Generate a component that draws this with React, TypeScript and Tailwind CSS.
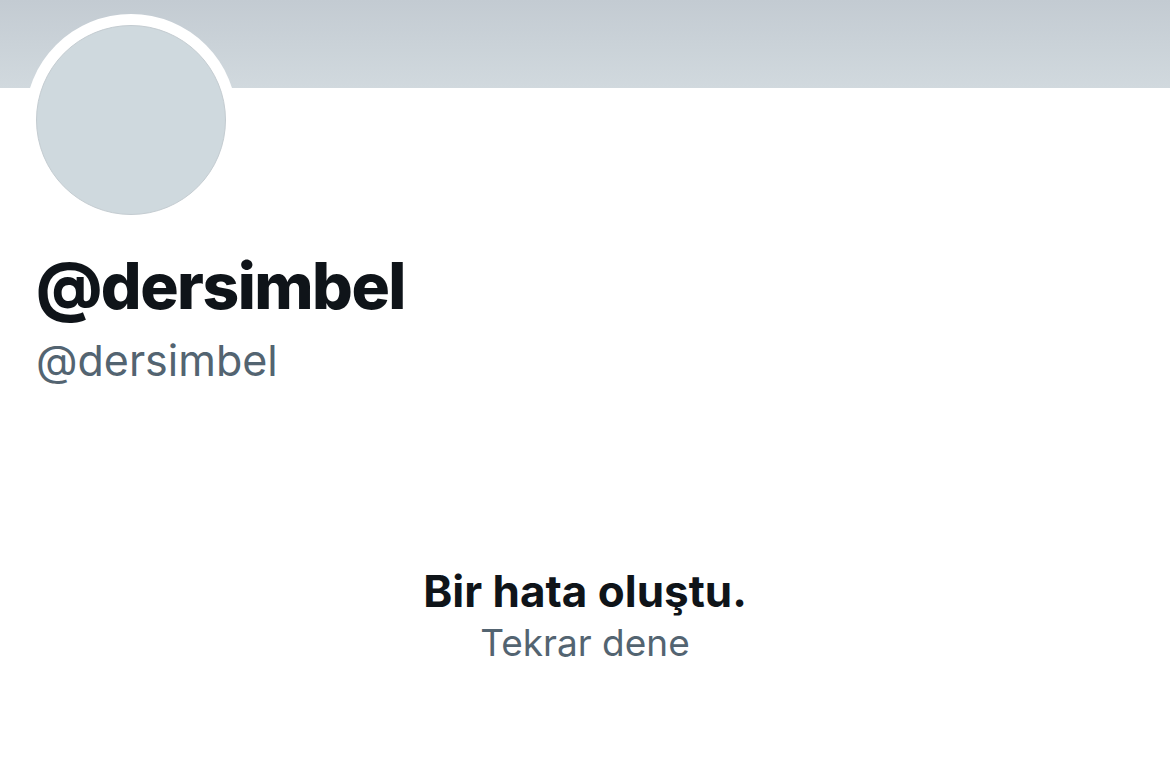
export default function App() {
  return (
    <div className="w-[1170px] h-[780px] bg-white overflow-hidden relative" style={{ fontFamily: "Inter, 'Noto Sans', sans-serif" }}>
      <div className="h-[88px] bg-gradient-to-b from-[#c3cbd2] to-[#d1d9de]" />
      <div className="absolute left-[25px] top-[14px] w-[212px] h-[212px] rounded-full bg-white flex items-center justify-center">
        <div className="w-[190px] h-[190px] rounded-full bg-[#cfd9de] border border-[#c4ccd1]" />
      </div>
      <div className="pl-[36px] pt-[166px]">
        <div className="text-[64px] font-extrabold text-[#0f1419] leading-[64px] tracking-[-1.5px]">@dersimbel</div>
        <div className="text-[43px] text-[#536471] leading-[48px] mt-[18px]">@dersimbel</div>
      </div>
      <div className="flex flex-col items-center mt-[181px]">
        <div className="text-[44px] font-bold text-[#0f1419] leading-[52px]">Bir hata oluştu.</div>
        <div className="text-[37px] text-[#536471] leading-[44px] mt-[4px]">Tekrar dene</div>
      </div>
    </div>
  );
}
